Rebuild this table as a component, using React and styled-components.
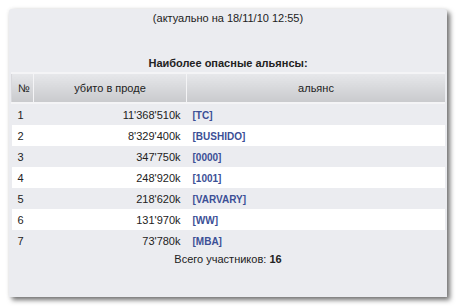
import React from "react";
import styled, { createGlobalStyle } from "styled-components";

const rows = [
  { n: 1, kills: "11'368'510k", ally: "[TC]" },
  { n: 2, kills: "8'329'400k", ally: "[BUSHIDO]" },
  { n: 3, kills: "347'750k", ally: "[0000]" },
  { n: 4, kills: "248'920k", ally: "[1001]" },
  { n: 5, kills: "218'620k", ally: "[VARVARY]" },
  { n: 6, kills: "131'970k", ally: "[WW]" },
  { n: 7, kills: "73'780k", ally: "[MBA]" },
];

const Global = createGlobalStyle`
  html, body {
    margin: 0;
    background: #ffffff;
  }
  body {
    font-family: "Liberation Sans", Arial, sans-serif;
    font-size: 11px;
    color: #222;
  }
`;

const Page = styled.div`
  padding: 9px 12px 10px 9px;
  width: 459px;
  height: 307px;
  box-sizing: border-box;
`;

const Panel = styled.div`
  width: 438px;
  height: 288px;
  box-sizing: border-box;
  background: #ebecf0;
  border-radius: 3px 3px 0 0;
  box-shadow: 3px 3px 5px rgba(0, 0, 0, 0.55), 0 0 4px rgba(0, 0, 0, 0.08);
  padding: 3px 2px 0 2px;
  display: flex;
  flex-direction: column;
`;

const Updated = styled.div`
  text-align: center;
  height: 13px;
  line-height: 13px;
`;

const Title = styled.div`
  text-align: center;
  font-weight: bold;
  margin-top: 31px;
  height: 16px;
  line-height: 14px;
`;

const Table = styled.table`
  width: 434px;
  border-collapse: collapse;
  table-layout: fixed;
`;

const Head = styled.th`
  height: 28px;
  padding: 0 6px;
  font-weight: normal;
  color: #222;
  text-align: ${(p) => p.$align || "center"};
  background: linear-gradient(#e6e7ea, #c9cacd);
  border-top: 2px solid #f4f4f6;
  border-bottom: 2px solid #f4f4f6;
  border-left: 1px solid #f4f4f6;
  &:first-child {
    border-left: 1px solid #d8d8dc;
  }
`;

const Row = styled.tr`
  background: ${(p) => (p.$even ? "#ffffff" : "#ebecf0")};
`;

const Cell = styled.td`
  height: 21px;
  padding: 0 6px;
  text-align: ${(p) => p.$align || "left"};
  white-space: nowrap;
`;

const Ally = styled.a`
  color: #3b4f96;
  font-weight: bold;
  font-size: 10px;
  text-decoration: none;
`;

const Total = styled.div`
  text-align: center;
  margin-top: 1px;
  line-height: 14px;
  b {
    font-weight: bold;
  }
`;

export default function App() {
  return (
    <>
      <Global />
      <Page>
        <Panel>
          <Updated>(актуально на 18/11/10 12:55)</Updated>
          <Title>Наиболее опасные альянсы:</Title>
          <Table>
            <colgroup>
              <col style={{ width: 22 }} />
              <col style={{ width: 153 }} />
              <col />
            </colgroup>
            <thead>
              <tr>
                <Head $align="left">№</Head>
                <Head>убито в проде</Head>
                <Head>альянс</Head>
              </tr>
            </thead>
            <tbody>
              {rows.map((r) => (
                <Row key={r.n} $even={r.n % 2 === 0}>
                  <Cell>{r.n}</Cell>
                  <Cell $align="right">{r.kills}</Cell>
                  <Cell>
                    <Ally href="#">{r.ally}</Ally>
                  </Cell>
                </Row>
              ))}
            </tbody>
          </Table>
          <Total>
            Всего участников: <b>16</b>
          </Total>
        </Panel>
      </Page>
    </>
  );
}
